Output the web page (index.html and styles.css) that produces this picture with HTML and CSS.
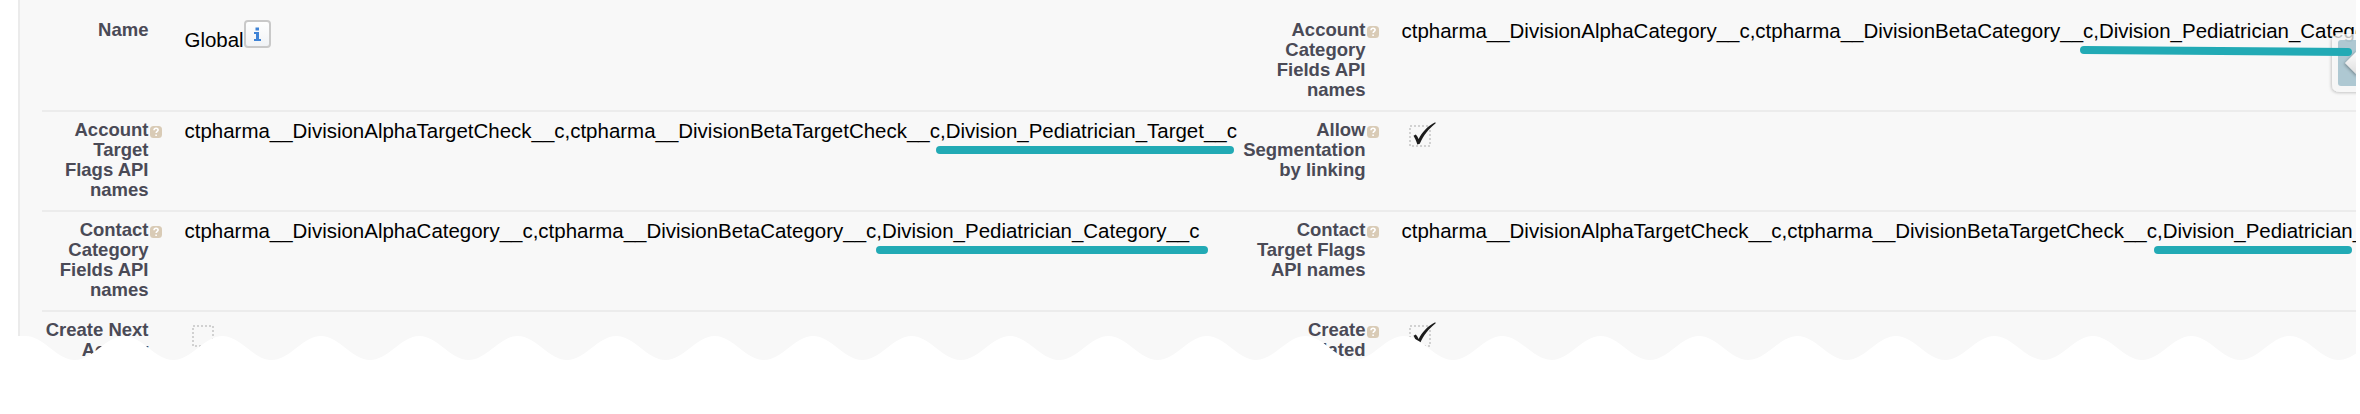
FILE: index.html
```html
<!DOCTYPE html>
<html lang="en">
<head>
<meta charset="utf-8">
<title>Global settings</title>
<link rel="stylesheet" href="styles.css">
</head>
<body>
<svg class="defs" width="0" height="0">
  <symbol id="help" viewBox="0 0 12 12">
    <rect width="12" height="12" rx="3.5" fill="#d9cbb6"/>
    <path d="M4 4.2C4.1 2.9 5 2.3 6.1 2.3c1.200 0 2 .7 2 1.700 0 1.300-1.900 1.500-1.900 3M6.100 8.400v1.500" fill="none" stroke="#fff" stroke-width="1.600"/>
  </symbol>
  <symbol id="box" viewBox="0 0 28 26">
    <rect x="1" y="5" width="20" height="20" fill="none" stroke="#c4c4c4" stroke-width="1.500" stroke-dasharray="2 2"/>
  </symbol>
  <symbol id="check" viewBox="0 0 28 26">
    <path d="M4.500 14.800l2.300-1.200c1.200 1.300 2 2.700 2.800 4.400C13 11.500 18.700 4.800 26.300 1.300l.4 1C19.500 8 14.500 14.500 10.800 22.800l-2.500.7C7.300 20 6 17.300 4.500 14.800z" fill="#1c1c1c"/>
  </symbol>
</svg>
<main class="page">
  <section class="detail">
    <div class="row">
      <div class="label">Name</div>
      <div class="help"></div>
      <div class="value name"><span>Global</span><svg class="info" viewBox="0 0 27 28"><defs><linearGradient id="g" x1="0" y1="0" x2="0" y2="1"><stop offset="0" stop-color="#fff"/><stop offset="1" stop-color="#f0f2f5"/></linearGradient></defs><rect x="1" y="1" width="25" height="26" rx="3" fill="url(#g)" stroke="#c9c9c9" stroke-width="2"/><path d="M11.500 7.500h3.500v3h-3.500zM10 12h5v7h2v2h-7v-2h2v-5h-2z" fill="#3f83d6"/></svg></div>
      <div class="label">Account Category Fields API names</div>
      <div class="help"><svg><use href="#help"/></svg></div>
      <div class="value">ctpharma__DivisionAlphaCategory__c,ctpharma__DivisionBetaCategory__c,Division_Pediatrician_Category__c</div>
    </div>
    <div class="row">
      <div class="label">Account Target<br>Flags API names</div>
      <div class="help"><svg><use href="#help"/></svg></div>
      <div class="value">ctpharma__DivisionAlphaTargetCheck__c,ctpharma__DivisionBetaTargetCheck__c,Division_Pediatrician_Target__c</div>
      <div class="label">Allow Segmentation by linking</div>
      <div class="help"><svg><use href="#help"/></svg></div>
      <div class="value"><svg class="checkbox"><use href="#box"/><use href="#check"/></svg></div>
    </div>
    <div class="row">
      <div class="label">Contact Category Fields API names</div>
      <div class="help"><svg><use href="#help"/></svg></div>
      <div class="value">ctpharma__DivisionAlphaCategory__c,ctpharma__DivisionBetaCategory__c,Division_Pediatrician_Category__c</div>
      <div class="label">Contact<br>Target Flags<br>API names</div>
      <div class="help"><svg><use href="#help"/></svg></div>
      <div class="value">ctpharma__DivisionAlphaTargetCheck__c,ctpharma__DivisionBetaTargetCheck__c,Division_Pediatrician_Target__c</div>
    </div>
    <div class="row last">
      <div class="label">Create Next Activity</div>
      <div class="help"></div>
      <div class="value"><svg class="checkbox"><use href="#box"/></svg></div>
      <div class="label">Create<br>Related</div>
      <div class="help"><svg><use href="#help"/></svg></div>
      <div class="value"><svg class="checkbox"><use href="#box"/><use href="#check"/></svg></div>
    </div>
  </section>
  <svg class="overlay" viewBox="0 0 2356 414">
    <defs>
      <linearGradient id="arrow" x1="0" y1="0" x2="0" y2="1"><stop offset="0" stop-color="#fff"/><stop offset="1" stop-color="#dcdcdc"/></linearGradient>
      <filter id="shadow" x="-30%" y="-30%" width="160%" height="160%"><feDropShadow dx="-1" dy="1" stdDeviation="1.500" flood-opacity=".3"/></filter>
    </defs>
    <!-- collapsed side panel handle -->
    <path d="M2364 34h-24q-8 0-8 8v42q0 8 8 8h24z" fill="#fff" fill-opacity=".7" filter="url(#shadow)"/>
    <path d="M2360 40h-19q-3 0-3 3v40q0 3 3 3h19z" fill="#a1bfcb" fill-opacity=".85"/>
    <path d="M2345 63l13-13v26z" fill="url(#arrow)" filter="url(#shadow)"/>
    <!-- highlighter strokes -->
    <g class="marks">
      <path d="M940 150H1230"/>
      <path d="M880 250H1204"/>
      <path d="M2084 50L2348 52"/>
      <path d="M2158 250H2348"/>
    </g>
    <!-- torn lower edge -->
    <path fill="#fff" d="M0 336H25.600c17.900 0 31.300 24 49.220 24s31.300-24 49.220-24c17.900 0 31.300 24 49.220 24s31.300-24 49.220-24c17.900 0 31.300 24 49.220 24s31.300-24 49.220-24c17.900 0 31.300 24 49.220 24s31.300-24 49.220-24c17.900 0 31.300 24 49.220 24s31.300-24 49.220-24c17.900 0 31.300 24 49.220 24s31.300-24 49.220-24c17.900 0 31.300 24 49.220 24s31.300-24 49.220-24c17.900 0 31.300 24 49.220 24s31.300-24 49.220-24c17.900 0 31.300 24 49.220 24s31.300-24 49.220-24c17.900 0 31.300 24 49.220 24s31.300-24 49.220-24c17.900 0 31.300 24 49.220 24s31.300-24 49.220-24c17.900 0 31.300 24 49.220 24s31.300-24 49.220-24c17.900 0 31.300 24 49.220 24s31.300-24 49.220-24c17.900 0 31.300 24 49.220 24s31.300-24 49.220-24c17.900 0 31.300 24 49.220 24s31.300-24 49.220-24c17.900 0 31.300 24 49.220 24s31.300-24 49.220-24c17.900 0 31.300 24 49.220 24s31.300-24 49.220-24c17.900 0 31.300 24 49.220 24s31.300-24 49.220-24c17.900 0 31.300 24 49.220 24s31.300-24 49.220-24c17.900 0 31.300 24 49.220 24s31.300-24 49.220-24c17.900 0 31.300 24 49.220 24s31.300-24 49.220-24c17.900 0 31.300 24 49.220 24s31.300-24 49.220-24c17.900 0 31.300 24 49.220 24s31.300-24 49.220-24c17.900 0 31.300 24 49.220 24s31.300-24 49.220-24V414H0z"/>
  </svg>
</main>
</body>
</html>
```
FILE: styles.css
```css
* { box-sizing: border-box; }
body {
  margin: 0;
  background: #fff;
  font-family: "Liberation Sans", Arial, sans-serif;
}
.defs { display: block; height: 0; }
.page {
  position: relative;
  width: 2356px;
  height: 414px;
  overflow: hidden;
}
.detail {
  margin-left: 18px;
  height: 361px;
  padding: 12px 0 0 22px;
  border-left: 2px solid #ebebeb;
  background: #f8f8f8;
  overflow: hidden;
}
.row {
  display: grid;
  grid-template-columns: 106.5px 36px 1052px 129px 36px 954.5px;
  height: 100px;
  border-bottom: 2px solid #ececec;
}
.last { border-bottom: 0; height: 49px; }
.label {
  padding-top: 8px;
  font-size: 18.5px;
  line-height: 20px;
  font-weight: bold;
  text-align: right;
  color: #4a4a56;
}
.help { padding: 14px 0 0 1px; }
.help svg { display: block; width: 12px; height: 12px; }
.value {
  padding-top: 8px;
  font-size: 20.48px;
  line-height: 22px;
  white-space: nowrap;
  color: #000;
}
.name { display: flex; align-items: flex-start; }
.name span { padding-top: 9px; }
.info { width: 27px; height: 28px; }
.checkbox { display: block; width: 28px; height: 26px; margin: 1px 0 0 7px; }
.overlay {
  position: absolute;
  left: 0;
  top: 0;
  width: 2356px;
  height: 414px;
}
.marks { fill: none; stroke: #22aab5; stroke-width: 8; stroke-linecap: round; }
```
